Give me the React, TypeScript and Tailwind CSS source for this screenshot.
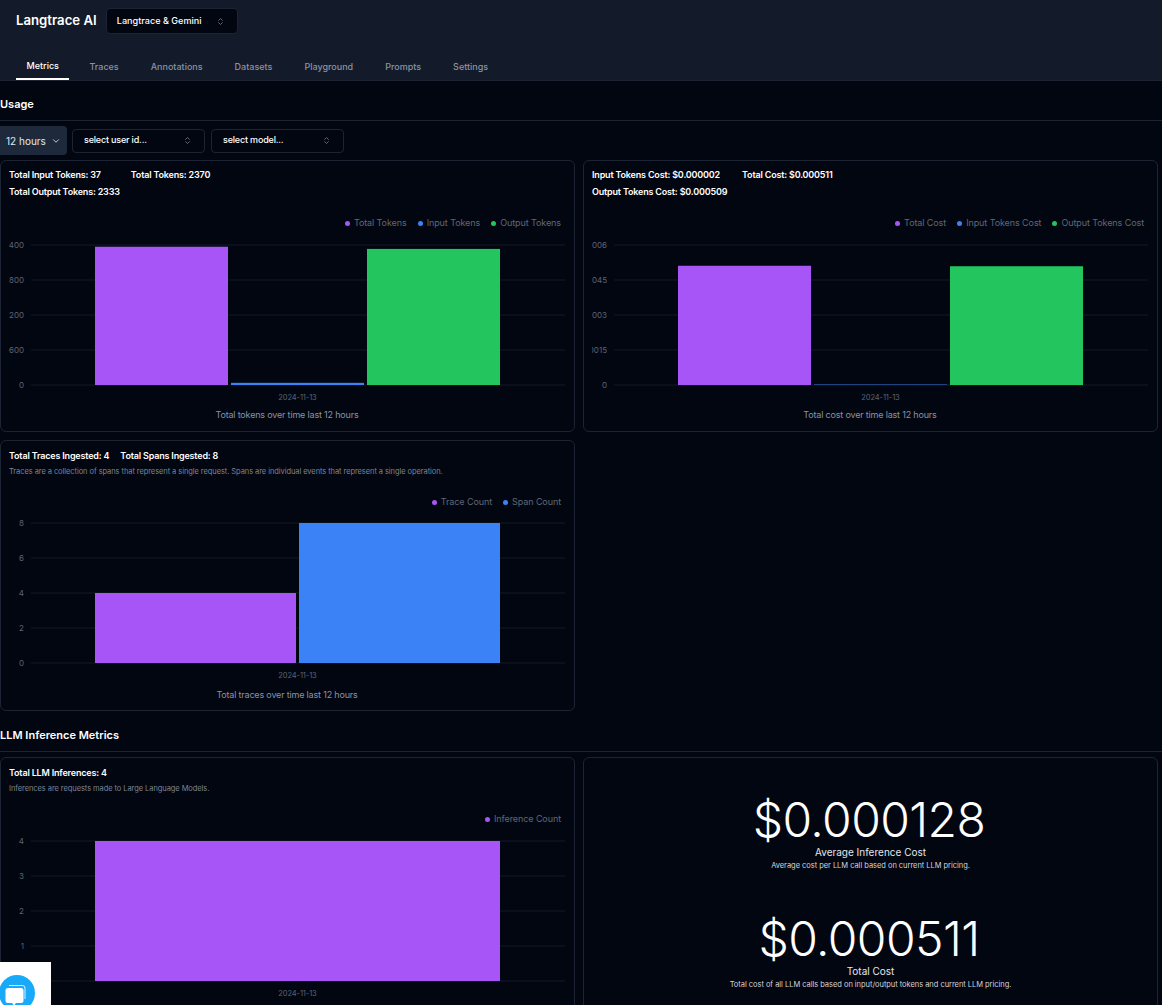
import React from 'react';
import { ChevronDown, ChevronsUpDown } from 'lucide-react';

const PURPLE = '#a855f7';
const BLUE = '#3b82f6';
const GREEN = '#22c55e';

const tabs = ['Metrics', 'Traces', 'Annotations', 'Datasets', 'Playground', 'Prompts', 'Settings'];

interface Series {
  name: string;
  color: string;
  value: number;
}

interface ChartProps {
  series: Series[];
  ticks: string[]; // top to bottom
  max: number;
  className?: string;
}

const BarChart: React.FC<ChartProps> = ({ series, ticks, max, className = 'mt-[5px]' }) => {
  const plotH = 140;
  const barW = (405 - (series.length - 1) * 3) / series.length;
  return (
    <svg width="557" height="168" className={`block ${className}`}>
      {ticks.map((t, i) => {
        const y = 9 + (i * plotH) / (ticks.length - 1);
        return (
          <g key={t}>
            <line x1="22" x2="556" y1={y} y2={y} stroke="#131a27" strokeWidth="1" />
            <text x="15" y={y + 3} textAnchor="end" fontSize="8" fill="#5b6473">
              {t}
            </text>
          </g>
        );
      })}
      {series.map((s, i) => {
        const h = (s.value / max) * plotH;
        return <rect key={s.name} x={86 + i * (barW + 3)} y={9 + plotH - h} width={barW} height={h} fill={s.color} />;
      })}
      <text x="288.5" y="164" textAnchor="middle" fontSize="7.5" letterSpacing="-0.1" fill="#5b6473">
        2024-11-13
      </text>
    </svg>
  );
};

const Legend: React.FC<{ series: Series[] }> = ({ series }) => (
  <div className="flex h-4 items-center justify-end gap-[11px] pr-[5px]">
    {series.map((s) => (
      <span key={s.name} className="flex items-center gap-[4px] text-[9px] tracking-[-0.01em] text-[#5f6877]">
        <span className="h-[5px] w-[5px] rounded-full" style={{ backgroundColor: s.color }} />
        {s.name}
      </span>
    ))}
  </div>
);

const Card: React.FC<{ className: string; head: React.ReactNode; children: React.ReactNode }> = ({ className, head, children }) => (
  <div className={`rounded-md border border-[#1c2434] px-2 ${className}`}>
    {head}
    {children}
  </div>
);

const Stats: React.FC<{ rows: string[][]; gap: string }> = ({ rows, gap }) => (
  <div className="h-[54px] pt-[5px]">
    {rows.map((row) => (
      <div key={row[0]} className={`flex h-[17px] items-center text-[9px] font-semibold tracking-[-0.02em] text-white ${gap}`}>
        {row.map((c) => (
          <span key={c}>{c}</span>
        ))}
      </div>
    ))}
  </div>
);

const StatsDesc: React.FC<{ rows: string[]; desc: string; gap: string }> = ({ rows, desc, gap }) => (
  <div className="h-[53px] pt-[6px]">
    <div className={`flex h-[17px] items-center text-[9px] font-semibold tracking-[-0.02em] text-white ${gap}`}>
      {rows.map((c) => (
        <span key={c}>{c}</span>
      ))}
    </div>
    <p className="mt-px text-[7.5px] leading-[13px] tracking-[-0.01em] whitespace-nowrap text-[#7c8595]">{desc}</p>
  </div>
);

const Caption: React.FC<{ text: string; className?: string }> = ({ text, className = 'mt-[3px]' }) => (
  <p className={`pr-[1px] text-center text-[9px] leading-[15px] tracking-[-0.02em] text-[#8a93a3] ${className}`}>{text}</p>
);

const SelectBox: React.FC<{ label: string }> = ({ label }) => (
  <button className="flex h-[24px] w-[133px] items-center justify-between rounded border border-[#1c2434] pr-3 pb-px pl-[11px] text-[9px] font-medium tracking-[-0.02em] text-white">
    {label}
    <ChevronsUpDown size={9} className="text-[#7c8595]" />
  </button>
);

const BigStat: React.FC<{ value: string; label: string; desc: string; className: string }> = ({ value, label, desc, className }) => (
  <div className={`flex flex-col items-center ${className}`}>
    <div className="pr-[3px] text-[48px] leading-[48px] font-light tracking-[-0.012em] text-white">{value}</div>
    <div className="mt-[1px] text-[10px] leading-[14px] text-[#e5e7eb]">{label}</div>
    <div className="mt-px text-[7.5px] leading-[12px] tracking-[-0.005em] text-[#d1d5db]">{desc}</div>
  </div>
);

const tokens: Series[] = [
  { name: 'Total Tokens', color: PURPLE, value: 2370 },
  { name: 'Input Tokens', color: BLUE, value: 37 },
  { name: 'Output Tokens', color: GREEN, value: 2333 },
];

const cost: Series[] = [
  { name: 'Total Cost', color: PURPLE, value: 0.000511 },
  { name: 'Input Tokens Cost', color: BLUE, value: 0.000002 },
  { name: 'Output Tokens Cost', color: GREEN, value: 0.000509 },
];

const traces: Series[] = [
  { name: 'Trace Count', color: PURPLE, value: 4 },
  { name: 'Span Count', color: BLUE, value: 8 },
];

const inferences: Series[] = [{ name: 'Inference Count', color: PURPLE, value: 4 }];

export default function App() {
  return (
    <div className="relative h-[1005px] overflow-hidden bg-[#020611] font-['Inter',sans-serif] text-white">
      <header className="h-[81px] border-b border-[#1c2434] bg-[#131a29]">
        <div className="flex items-center gap-[9px] pt-[8px] pl-4">
          <span className="text-[13.2px] font-semibold">Langtrace AI</span>
          <button className="flex h-[26px] w-[132px] items-center justify-between rounded border border-[#1c2434] bg-[#020611] pr-3 pl-[10px] text-[9.1px] font-medium">
            Langtrace &amp; Gemini
            <ChevronsUpDown size={9} className="text-[#7c8595]" />
          </button>
        </div>
        <nav className="mt-[19px] flex gap-[10px] pl-4">
          {tabs.map((t, i) => (
            <span
              key={t}
              className={
                i === 0
                  ? 'mr-[-1px] h-[27px] border-b-2 border-white px-[10.5px] pt-[6px] text-[9px] font-medium text-white'
                  : 'h-[27px] px-[11px] pt-[7px] text-[9px] font-medium text-[#8a93a3]'
              }
            >
              {t}
            </span>
          ))}
        </nav>
      </header>

      <h2 className="flex h-[40px] items-center border-b border-[#1c2434] pt-[7px] text-[11px] font-semibold">Usage</h2>

      <div className="flex h-[39px] items-center gap-[5px]">
        <button className="flex h-[29px] w-[67px] items-center justify-between rounded-r bg-[#1e293b] px-[6px] pt-px text-[10px] text-[#e2e8f0]">
          12 hours
          <ChevronDown size={10} />
        </button>
        <SelectBox label="select user id..." />
        <div className="ml-px">
          <SelectBox label="select model..." />
        </div>
      </div>

      <div className="grid grid-cols-[575px_575px] gap-2">
        <Card
          className="h-[272px]"
          head={<Stats gap="gap-[30px]" rows={[['Total Input Tokens: 37', 'Total Tokens: 2370'], ['Total Output Tokens: 2333']]} />}
        >
          <Legend series={tokens} />
          <BarChart series={tokens} ticks={['2400', '1800', '1200', '600', '0']} max={2400} />
          <Caption text="Total tokens over time last 12 hours" />
        </Card>
        <Card
          className="h-[272px]"
          head={<Stats gap="gap-[22px]" rows={[['Input Tokens Cost: $0.000002', 'Total Cost: $0.000511'], ['Output Tokens Cost: $0.000509']]} />}
        >
          <Legend series={cost} />
          <BarChart series={cost} ticks={['0.0006', '0.00045', '0.0003', '0.00015', '0']} max={0.0006} />
          <Caption text="Total cost over time last 12 hours" />
        </Card>
        <Card
          className="h-[271px]"
          head={
            <StatsDesc
              rows={['Total Traces Ingested: 4', 'Total Spans Ingested: 8']}
              gap="gap-[11px]"
              desc="Traces are a collection of spans that represent a single request. Spans are individual events that represent a single operation."
            />
          }
        >
          <Legend series={traces} />
          <BarChart series={traces} ticks={['8', '6', '4', '2', '0']} max={8} className="mt-[4px]" />
          <Caption text="Total traces over time last 12 hours" className="mt-[5px]" />
        </Card>
      </div>

      <h2 className="mt-[8px] flex h-[33px] items-center border-b border-[#1c2434] pt-[1px] text-[11px] font-semibold">LLM Inference Metrics</h2>

      <div className="mt-[5px] grid grid-cols-[575px_575px] gap-2">
        <Card
          className="h-[272px]"
          head={
            <StatsDesc
              rows={['Total LLM Inferences: 4']}
              gap="gap-[11px]"
              desc="Inferences are requests made to Large Language Models."
            />
          }
        >
          <Legend series={inferences} />
          <BarChart series={inferences} ticks={['4', '3', '2', '1', '0']} max={4} />
        </Card>
        <div className="h-[272px] rounded-md border border-[#1c2434]">
          <BigStat
            className="pt-[38px]"
            value="$0.000128"
            label="Average Inference Cost"
            desc="Average cost per LLM call based on current LLM pricing."
          />
          <BigStat
            className="pt-[43px]"
            value="$0.000511"
            label="Total Cost"
            desc="Total cost of all LLM calls based on input/output tokens and current LLM pricing."
          />
        </div>
      </div>

      {/* chat widget sits over the page */}
      <div className="absolute bottom-0 left-0 h-[43px] w-[51px] overflow-hidden bg-white">
        <div className="absolute top-[13px] left-[-1px] h-9 w-9 rounded-full bg-[#18aaf8]">
          <svg width="24" height="24" viewBox="0 0 24 24" className="absolute top-[8px] left-[4px]">
            <path d="M6 2.5h13.5a2.5 2.5 0 0 1 2.5 2.5v11" fill="none" stroke="#fff" strokeWidth="1" opacity="0.85" />
            <path d="M5 5h13a2.5 2.5 0 0 1 2.5 2.5v10A2.5 2.5 0 0 1 18 20h-5l-2 2.5L9 20H5a2.5 2.5 0 0 1-2.5-2.5v-10A2.5 2.5 0 0 1 5 5z" fill="#fff" />
          </svg>
        </div>
      </div>
    </div>
  );
}
